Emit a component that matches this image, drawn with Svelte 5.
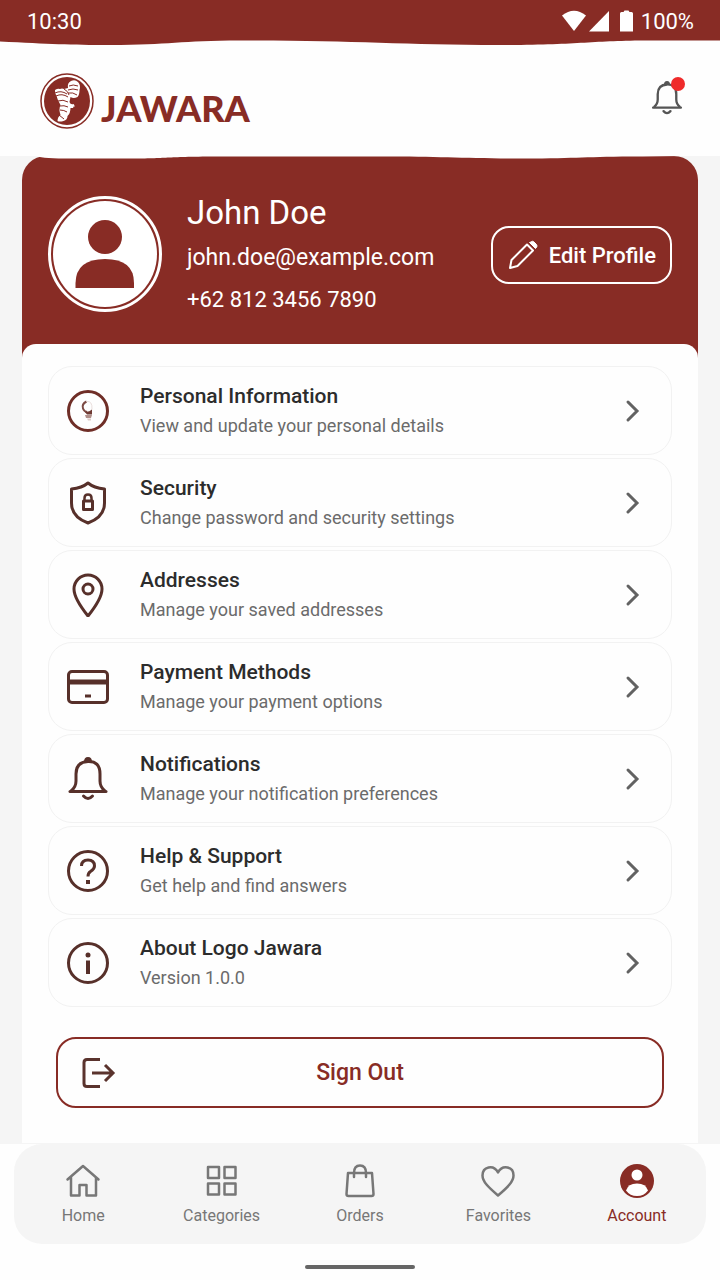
<script lang="ts">
  type Item = { icon: string; title: string; text: string };

  const items: Item[] = [
    { icon: 'person',  title: 'Personal Information', text: 'View and update your personal details' },
    { icon: 'shield',  title: 'Security',             text: 'Change password and security settings' },
    { icon: 'pin',     title: 'Addresses',            text: 'Manage your saved addresses' },
    { icon: 'card',    title: 'Payment Methods',      text: 'Manage your payment options' },
    { icon: 'bell',    title: 'Notifications',        text: 'Manage your notification preferences' },
    { icon: 'help',    title: 'Help & Support',       text: 'Get help and find answers' },
    { icon: 'info',    title: 'About Logo Jawara',    text: 'Version 1.0.0' },
  ];

  const tabs = ['Home', 'Categories', 'Orders', 'Favorites', 'Account'];

  let active = $state('Account');
</script>

{#snippet bell(cls: string)}
  <svg class={cls} viewBox="0 0 44 44" fill="none" stroke="currentColor" stroke-width="3" aria-hidden="true">
    <path d="M4 34.5h36" stroke-linecap="round" />
    <path d="M5 34q5-4 5-10v-7q0-12 12-12.500t12 12.500v7q0 6 5 10" />
    <path d="M18 5q0-5 4-5t4 5z" fill="currentColor" stroke="none" />
    <path d="M17.500 39q4.500 5 9 0" stroke-linecap="round" />
  </svg>
{/snippet}

<div class="app">
  <div class="status">
    <span>10:30</span>
    <div class="status-right">
      <svg width="80" height="24" viewBox="0 0 80 24" fill="#fff" aria-hidden="true">
        <path d="M1 6.500Q13-3 25 6.500L13 22z" />
        <path d="M48 2v20.500H28z" />
        <path d="M59 4.500q0-1.500 1.500-1.500h2l1-1.500h4l1 1.500h2q1.500 0 1.500 1.500v18H59z" />
      </svg>
      <span>100%</span>
    </div>
  </div>
  <svg class="wave" viewBox="0 0 720 6" preserveAspectRatio="none" aria-hidden="true">
    <path d="M0 0V1.500C50 4 70 5 110 5C170 5 180 0.500 240 0.500C350 0 400 5 500 5C580 5 590 0.500 650 0.500H720V0z" fill="#882c25" />
  </svg>

  <header class="header">
    <div class="brand">
      <svg width="54" height="56" viewBox="0 0 54 56" aria-hidden="true">
        <ellipse cx="27" cy="28" rx="26" ry="27" fill="#fff" stroke="#882c25" stroke-width="1.500" />
        <ellipse cx="27" cy="28" rx="23" ry="24" fill="#882c25" />
        <path d="M15 17q3-2 5-1q2-1 4 0l4-1q-1-5 3-7q4-2 7 1q3 3 1.500 8q0 5-2 7q-4 2-7 0l-1 5q1 3 4 2q2 2 0 4h-3q0 5-3 8q0 4-4 5q-4 1-6 0q0-4 3-6q-2-6 0-10q-3-5-4-9q-2-3-1.500-6z" fill="#fff" />
        <path d="M15 20q6-3 12 1M16 23q6-3 12 1M18 28q5-2 10 1M20 33q4-1 8 1M20 37q4 0 7 2M19 42l5 4M29 13q4-2 9 0M28 17q5-2 10 0M28 20q5-1 9 2M24 16q4 2 5 6M33 34l2 1" fill="none" stroke="#882c25" />
      </svg>
      <span class="wordmark">JAWARA</span>
    </div>
    <button class="alerts" aria-label="Notifications, new">
      {@render bell('alerts-bell')}
      <span class="dot"></span>
    </button>
  </header>

  <main>
    <section class="profile">
      <svg class="profile-wave" viewBox="0 0 676 4" preserveAspectRatio="none" aria-hidden="true">
        <path d="M14 0C20 2 30 2.500 50 2.500H110C150 2.500 140 0.500 200 0.500H360C420 0.500 440 2.500 500 2.500C560 2.500 560 0.500 620 0.500L660 0z" fill="#fefefe" />
      </svg>
      <svg class="avatar" width="116" height="118" viewBox="0 0 116 118" aria-hidden="true">
        <ellipse cx="58" cy="58" rx="55.500" ry="56.500" fill="none" stroke="#fff" stroke-width="3" />
        <ellipse cx="58" cy="58" rx="52" ry="53" fill="#fff" />
        <circle cx="58" cy="41" r="17" fill="#882c25" />
        <path d="M28.500 92V87Q29 63 58 63T87 87V92z" fill="#882c25" />
      </svg>
      <div class="who">
        <h1>John Doe</h1>
        <p class="email">john.doe@example.com</p>
        <p>+62 812 3456 7890</p>
      </div>
      <button class="edit">
        <svg width="32" height="32" viewBox="0 0 32 32" fill="none" stroke="#fff" stroke-width="2" stroke-linejoin="round" aria-hidden="true">
          <path d="M3 29l1.500-8L20 5.500l6 6L10.500 27z" />
          <path d="M22.500 3.500l6 6 1-1q1-1.500 0-3l-2.500-2.500q-1.500-1.500-3 0z" fill="#fff" stroke-width="1" />
        </svg>
        Edit Profile
      </button>
    </section>

    <div class="sheet">
      <div class="menu">
        {#each items as item}
          <button class="row">
            {#if item.icon === 'bell'}
              {@render bell('icon')}
            {:else}
              <svg class="icon" viewBox="0 0 44 44" fill="none" stroke="currentColor" stroke-width="3" stroke-linejoin="round" aria-hidden="true">
                {#if item.icon === 'person'}
                  <circle cx="22" cy="22" r="19.500" stroke="#6f2e27" />
                  <path d="M20.500 12.500q-5 2.500-3.500 7q1 3 4 3.500" stroke="#7d4b44" stroke-width="2" />
                  <path d="M20.500 12.500q6-1 5.500 8" stroke="#eadfdd" stroke-width="1" />
                  <path d="M18.500 22.500q4 1 7.500-2v5h-5z" fill="#6f3a33" stroke="none" />
                  <path d="M19 26h7l-1 3h-5z" fill="#b08f8a" stroke="none" />
                  <path d="M21 29.500h4v2h-3z" fill="#ddcbc8" stroke="none" />
                {:else if item.icon === 'shield'}
                  <path d="M22 2q6 5 16.500 6v14q0 14-16.500 20Q5.500 36 5.500 22V8Q16 7 22 2z" />
                  <rect x="17.500" y="20" width="9" height="8.500" stroke-width="3" />
                  <path d="M18.500 20v-3q0-3.500 3.500-3.500t3.500 3.500v3" stroke-width="2.500" />
                {:else if item.icon === 'pin'}
                  <path d="M22 43C14 33 8 24 8 16a14 14 0 0 1 28 0c0 8-6 17-14 27z" />
                  <circle cx="22" cy="16" r="5" />
                {:else if item.icon === 'card'}
                  <rect x="2.500" y="6.500" width="39" height="31" rx="3.500" />
                  <path d="M3 17h38" stroke-width="5" />
                  <path d="M19 31h6" />
                {:else if item.icon === 'help'}
                  <circle cx="22" cy="22" r="19.500" />
                  <path d="M15.500 17q0-6 6.500-6t6.500 6q0 3-4 5.500-2.500 1.500-2.500 5" />
                  <path d="M22 31v4" stroke-width="4" />
                {:else}
                  <circle cx="22" cy="22" r="19.500" />
                  <circle cx="22" cy="14" r="2.500" fill="currentColor" stroke="none" />
                  <path d="M22 19.500v13.500" stroke-width="4" />
                {/if}
              </svg>
            {/if}
            <span class="row-body">
              <span class="row-title">{item.title}</span>
              <span class="row-text">{item.text}</span>
            </span>
            <svg class="chevron" width="24" height="24" viewBox="0 0 24 24" fill="none" stroke="currentColor" stroke-width="3" stroke-linecap="round" aria-hidden="true">
              <path d="M8 3l9 9-9 9" />
            </svg>
          </button>
        {/each}
      </div>

      <button class="signout">
        <svg width="36" height="36" viewBox="0 0 36 36" fill="none" stroke="#5a332d" stroke-width="3" aria-hidden="true">
          <path d="M20 4.500H7Q4 4.500 4 7.500v21q0 3 3 3h13" />
          <path d="M12 18h21M25 10l8 8-8 8" />
        </svg>
        <span>Sign Out</span>
      </button>
    </div>
  </main>

  <footer>
    <nav>
      {#each tabs as tab}
        <button class="tab" class:active={tab === active} onclick={() => (active = tab)}>
          <svg width="36" height="36" viewBox="0 0 36 36" fill="none" stroke="currentColor" stroke-width="2.500" stroke-linejoin="round" stroke-linecap="round" aria-hidden="true">
            {#if tab === 'Home'}
              <path d="M2.500 16.500L18 3l15.500 13.500M6 14.500V32.500h8.500V22h7v10.500H31V14.500" />
            {:else if tab === 'Categories'}
              <rect x="4" y="4" width="11" height="11" />
              <rect x="20.500" y="4" width="11" height="11" />
              <rect x="4" y="20.500" width="11" height="11" />
              <rect x="20.500" y="20.500" width="11" height="11" />
            {:else if tab === 'Orders'}
              <path d="M6 10h24l1.500 21q0 2-2 2h-23q-2 0-2-2z" />
              <path d="M12 14V10q0-7.500 6-7.500t6 7.500v4" />
            {:else if tab === 'Favorites'}
              <path d="M18 32.500C8 24 2.500 18.500 2.500 12.500C2.500 3.500 13.500 1 18 9.500C22.500 1 33.500 3.500 33.500 12.500C33.500 18.500 28 24 18 32.500z" />
            {:else}
              <circle cx="18" cy="18" r="17" fill="currentColor" stroke="none" />
              <circle cx="18" cy="12" r="5.500" fill="#fff" stroke="none" />
              <path d="M7 27.500Q9 20.500 18 20.500T29 27.500Q25 33 18 33T7 27.500z" fill="#fff" stroke="none" />
            {/if}
          </svg>
          {tab}
        </button>
      {/each}
    </nav>
    <div class="handle"></div>
  </footer>
</div>

<style>
  :global(body) {
    margin: 0;
    background: #fefefe;
  }
  .app {
    min-height: 100vh;
    display: flex;
    flex-direction: column;
    font-family: Roboto, 'Liberation Sans', sans-serif;
    color: #2c2c2c;
  }
  button {
    font: inherit;
    color: inherit;
    background: none;
    border: 0;
    padding: 0;
    cursor: pointer;
  }
  svg {
    display: block;
    flex-shrink: 0;
  }

  .status {
    height: 40px;
    padding: 2px 26px 0 27px;
    box-sizing: border-box;
    display: flex;
    align-items: center;
    justify-content: space-between;
    background: #882c25;
    color: #fff;
    font-size: 22px;
  }
  .status-right {
    display: flex;
    align-items: center;
  }
  .wave {
    width: 100%;
    height: 6px;
  }

  .header {
    height: 110px;
    padding: 0 36px 0 40px;
    box-sizing: border-box;
    display: flex;
    align-items: center;
    justify-content: space-between;
  }
  .brand {
    display: flex;
    align-items: center;
    gap: 7px;
  }
  .wordmark {
    font-family: Lato, sans-serif;
    font-size: 36px;
    font-weight: 900;
    line-height: 48px;
    padding-top: 14px;
    color: #882c25;
  }
  .alerts {
    position: relative;
    margin-bottom: 6px;
    color: #555;
  }
  .alerts-bell {
    width: 34px;
    height: 34px;
  }
  .dot {
    position: absolute;
    top: -4px;
    right: -1px;
    width: 14px;
    height: 14px;
    border-radius: 50%;
    background: #ef2b2b;
  }

  main {
    padding: 0 22px;
    background: #f5f5f5;
    flex: 1;
  }
  .profile {
    position: relative;
    padding: 33px 26px 37px 25px;
    margin-bottom: -14px;
    display: flex;
    align-items: center;
    background: #882c25;
    color: #fff;
    border-radius: 24px 24px 0 0;
  }
  .profile-wave {
    position: absolute;
    top: 0;
    left: 0;
    width: 100%;
    height: 4px;
  }
  .who {
    flex: 1;
    margin-left: 24px;
  }
  h1 {
    margin: 0;
    font-size: 33px;
    line-height: 48px;
    font-weight: 400;
  }
  .who p {
    margin: 0;
    font-size: 22px;
    line-height: 42px;
  }
  .who .email {
    font-size: 23px;
  }
  .edit {
    display: flex;
    align-items: center;
    justify-content: center;
    gap: 10px;
    height: 58px;
    padding: 0 14px;
    border: 2px solid #fff;
    border-radius: 18px;
    font-size: 22px;
    font-weight: 500;
  }

  .sheet {
    position: relative;
    padding: 22px 26px 35px;
    background: #fefefe;
    border-radius: 14px 14px 0 0;
  }
  .menu {
    display: flex;
    flex-direction: column;
    gap: 3px;
  }
  .row {
    display: flex;
    align-items: center;
    min-height: 89px;
    padding: 0 27px 0 17px;
    border: 1px solid #f2f2f2;
    border-radius: 24px;
    text-align: left;
  }
  .icon {
    width: 44px;
    height: 44px;
    color: #57302a;
  }
  .row-body {
    flex: 1;
    margin-left: 30px;
  }
  .row-title,
  .row-text {
    display: block;
    line-height: 29px;
  }
  .row-title {
    font-size: 21px;
    font-weight: 500;
  }
  .row-text {
    font-size: 18px;
    color: #6b6b6b;
  }
  .chevron {
    color: #626262;
  }

  .signout {
    display: grid;
    grid-template-columns: 36px 1fr 36px;
    align-items: center;
    height: 71px;
    width: calc(100% - 16px);
    margin: 30px 8px 0;
    padding: 0 22px;
    border: 2px solid #882c25;
    border-radius: 20px;
    color: #882c25;
    font-size: 23px;
    font-weight: 500;
  }

  footer {
    padding: 0 14px 11px;
  }
  nav {
    display: flex;
    padding: 19px 0 17px;
    background: #f5f5f5;
    border-radius: 28px;
  }
  .tab {
    flex: 1;
    display: flex;
    flex-direction: column;
    align-items: center;
    gap: 6px;
    color: #777;
    font-size: 16px;
    line-height: 22px;
  }
  .tab.active {
    color: #882c25;
  }
  .handle {
    width: 110px;
    height: 4px;
    margin: 21px auto 0;
    border-radius: 2px;
    background: #666;
  }
</style>
